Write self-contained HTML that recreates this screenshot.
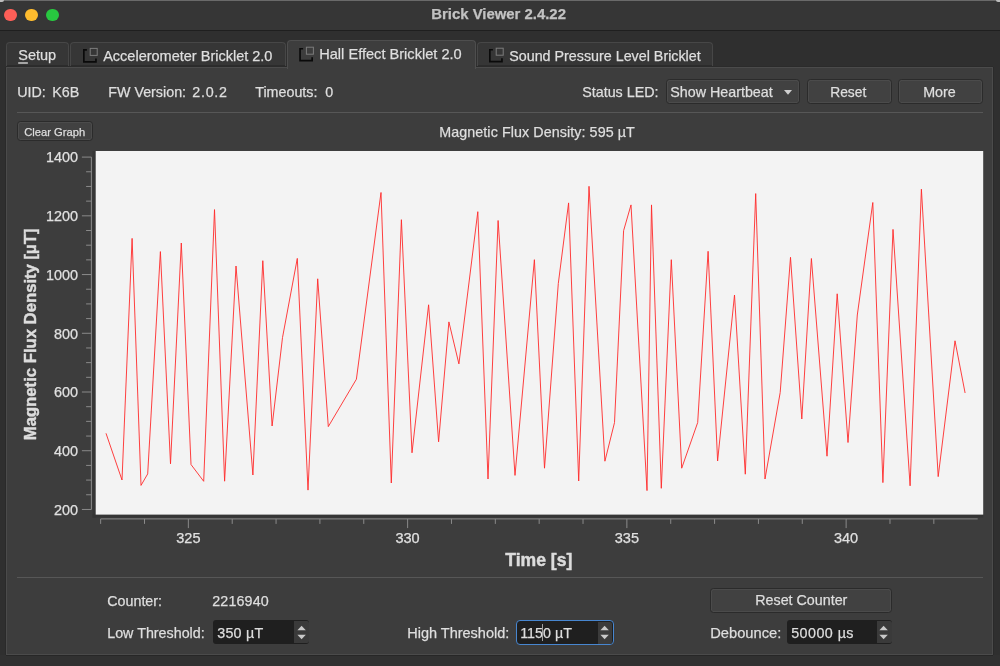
<!DOCTYPE html>
<html><head><meta charset="utf-8">
<style>
*{margin:0;padding:0;box-sizing:border-box}
html,body{width:1000px;height:666px;overflow:hidden;background:#2f2f2f}
body{position:relative;font-family:"Liberation Sans",sans-serif;color:#dedede;font-size:14.3px;-webkit-text-stroke:0.25px currentColor}
.a{position:absolute;white-space:nowrap;will-change:transform;text-indent:-0.8px}
#titlebar{position:absolute;left:0;top:0;width:1000px;height:31px;background:#363636;border-bottom:1px solid #1f1f1f}
.tl{position:absolute;top:8.5px;width:12.5px;height:12.5px;border-radius:50%}
.tab{position:absolute;top:42px;height:24.4px;background:#363636;border:1px solid #474747;border-bottom:none;border-radius:4px 4px 0 0;box-shadow:inset 0 -1px 0 #2c2c2c}
.tab.sel{top:40px;height:29px;background:#3d3d3d;border-color:#4e4e4e;z-index:2;border-bottom:none;box-shadow:none}
#pane{position:absolute;left:6px;top:67.4px;width:987px;height:587.6px;background:#3d3d3d;border:1px solid #4b4b4b;box-shadow:0 1px 0 #272727,0 -1px 0 #2b2b2b,-1px 0 0 #2a2a2a,1px 0 0 #2a2a2a}
.btn{position:absolute;background:#414141;border:1px solid #2b2b2b;border-radius:3.5px;box-shadow:inset 0 0 0 1px #4b4b4b,inset 0 1px 0 #575757}
.spin{position:absolute;background:#1f1f1f;border-radius:3px}
.hr{position:absolute;height:1px;background:#575757}
</style></head><body>
<div id="titlebar"></div>
<div class="a" style="left:0;top:0;width:1000px;height:1px;background:#6a6a6a"></div>
<div class="a" style="left:0;top:0;width:4px;height:2px;background:#bdbdbd;border-radius:0 0 4px 0"></div>
<div class="a" style="left:996px;top:0;width:4px;height:2px;background:#bdbdbd;border-radius:0 0 0 4px"></div>
<div class="tl" style="left:4.4px;background:#fe5f57"></div>
<div class="tl" style="left:25.4px;background:#febc2e"></div>
<div class="tl" style="left:46.4px;background:#28c840"></div>
<div class="a" style="left:0;width:998px;top:6px;text-align:center;font-weight:bold;font-size:14.9px;color:#c2c2c2">Brick Viewer 2.4.22</div>

<div class="a" style="left:0;top:655px;width:1000px;height:11px;background:#313131"></div>
<div id="pane"></div>

<div class="tab" style="left:6px;width:63px"></div>
<div class="tab" style="left:70px;width:216px"></div>
<div class="tab sel" style="left:287px;width:189px"></div>
<div class="tab" style="left:477px;width:236px"></div>

<div class="a" style="left:18.6px;top:47.4px;z-index:3;font-size:14.5px"><u style="text-decoration-color:#a5a5a5;text-decoration-thickness:1.6px;text-underline-offset:1.6px">S</u>etup</div>
<div class="a" style="left:103.5px;top:48px;z-index:3;font-size:14.5px">Accelerometer Bricklet 2.0</div>
<div class="a" style="left:320px;top:46.3px;z-index:3;font-size:14.6px">Hall Effect Bricklet 2.0</div>
<div class="a" style="left:510px;top:48px;z-index:3">Sound Pressure Level Bricklet</div>

<!-- info row -->
<div class="a" style="left:18px;top:84px">UID:</div>
<div class="a" style="left:52.5px;top:84px">K6B</div>
<div class="a" style="left:108.5px;top:84px">FW Version:</div>
<div class="a" style="left:193px;top:84px;letter-spacing:0.75px">2.0.2</div>
<div class="a" style="left:256px;top:84px">Timeouts:</div>
<div class="a" style="left:326px;top:84px">0</div>
<div class="a" style="left:583px;top:84px">Status LED:</div>
<div class="btn" style="left:666px;top:79px;width:134px;height:25px"></div>
<div class="a" style="left:671px;top:84px">Show Heartbeat</div>
<div class="btn" style="left:807px;top:79px;width:85px;height:25px"></div>
<div class="a" style="left:831px;top:84.7px;font-size:13.8px">Reset</div>
<div class="btn" style="left:898px;top:79px;width:85px;height:25px"></div>
<div class="a" style="left:924px;top:84px">More</div>
<div class="hr" style="left:17px;top:112px;width:966px"></div>

<div class="btn" style="left:17px;top:121px;width:76px;height:20px"></div>
<div class="a" style="left:24.5px;top:125.5px;font-size:11.2px">Clear Graph</div>
<div class="a" style="left:440px;top:123.7px;letter-spacing:0.08px">Magnetic Flux Density: 595 µT</div>

<svg class="a" style="left:0;top:0" width="1000" height="666" id="plot">
<rect x="92.6" y="151" width="3.1" height="366.5" fill="#363636"/>
<rect x="92.6" y="514.6" width="890.6" height="3" fill="#353535"/>
<rect x="95.7" y="151" width="887.5" height="363.6" fill="#f3f3f3"/>
<polyline points="106.0,433.3 122.0,480.0 132.1,238.4 141.0,485.4 147.7,473.9 160.4,251.6 170.5,463.8 181.3,243.0 191.0,464.5 203.7,481.3 214.5,209.6 224.6,481.2 236.0,266.0 252.9,475.0 262.8,260.7 272.1,426.0 282.5,337.6 297.3,258.4 308.0,490.1 317.7,278.8 328.3,426.6 356.4,379.2 381.0,192.5 391.3,483.0 401.4,219.7 412.0,452.8 428.6,304.8 438.6,441.8 448.9,321.9 458.9,363.9 477.8,211.7 488.0,479.0 498.1,220.5 515.0,475.4 534.4,259.7 544.5,468.2 558.3,283.5 568.6,202.9 578.7,481.0 589.0,186.3 604.9,461.2 614.5,422.6 623.6,230.7 631.0,204.9 647.0,490.6 651.5,204.9 661.3,488.3 671.3,259.7 681.7,468.2 697.7,422.5 708.1,251.3 717.6,461.0 734.5,295.0 745.3,474.2 755.7,193.6 765.0,479.0 780.2,392.5 790.5,257.3 801.8,419.0 811.4,258.5 827.0,456.2 837.2,293.8 848.0,442.5 857.3,315.0 872.8,202.5 882.9,482.6 893.0,229.4 910.1,485.8 921.4,189.2 938.2,476.6 955.0,340.8 965.1,393.0" fill="none" stroke="#ff2a2a" stroke-width="0.9" stroke-linejoin="miter" stroke-miterlimit="10"/>
<path d="M91.4,157.1V509.4 M81.9,157.10H91.4 M86.1,171.78H91.4 M86.1,186.46H91.4 M86.1,201.14H91.4 M81.9,215.83H91.4 M86.1,230.51H91.4 M86.1,245.19H91.4 M86.1,259.87H91.4 M81.9,274.55H91.4 M86.1,289.23H91.4 M86.1,303.91H91.4 M86.1,318.60H91.4 M81.9,333.28H91.4 M86.1,347.96H91.4 M86.1,362.64H91.4 M86.1,377.32H91.4 M81.9,392.00H91.4 M86.1,406.69H91.4 M86.1,421.37H91.4 M86.1,436.05H91.4 M81.9,450.73H91.4 M86.1,465.41H91.4 M86.1,480.09H91.4 M86.1,494.77H91.4 M81.9,509.46H91.4 M100.65,518.9H977.7 M100.65,518.9V523.9 M144.50,518.9V523.9 M188.35,518.9V528.1 M232.21,518.9V523.9 M276.06,518.9V523.9 M319.91,518.9V523.9 M363.76,518.9V523.9 M407.61,518.9V528.1 M451.47,518.9V523.9 M495.32,518.9V523.9 M539.17,518.9V523.9 M583.02,518.9V523.9 M626.87,518.9V528.1 M670.73,518.9V523.9 M714.58,518.9V523.9 M758.43,518.9V523.9 M802.28,518.9V523.9 M846.13,518.9V528.1 M889.99,518.9V523.9 M933.84,518.9V523.9" stroke="#8a8a8a" stroke-width="1" fill="none"/>
<text x="78" y="162.4" text-anchor="end" font-size="14.4" fill="#e0e0e0" stroke="#e0e0e0" stroke-width="0.25">1400</text>
<text x="78" y="221.1" text-anchor="end" font-size="14.4" fill="#e0e0e0" stroke="#e0e0e0" stroke-width="0.25">1200</text>
<text x="78" y="279.9" text-anchor="end" font-size="14.4" fill="#e0e0e0" stroke="#e0e0e0" stroke-width="0.25">1000</text>
<text x="78" y="338.6" text-anchor="end" font-size="14.4" fill="#e0e0e0" stroke="#e0e0e0" stroke-width="0.25">800</text>
<text x="78" y="397.3" text-anchor="end" font-size="14.4" fill="#e0e0e0" stroke="#e0e0e0" stroke-width="0.25">600</text>
<text x="78" y="456.0" text-anchor="end" font-size="14.4" fill="#e0e0e0" stroke="#e0e0e0" stroke-width="0.25">400</text>
<text x="78" y="514.8" text-anchor="end" font-size="14.4" fill="#e0e0e0" stroke="#e0e0e0" stroke-width="0.25">200</text>
<text x="188.4" y="542.6" text-anchor="middle" font-size="14.5" fill="#e0e0e0" stroke="#e0e0e0" stroke-width="0.25">325</text>
<text x="407.6" y="542.6" text-anchor="middle" font-size="14.5" fill="#e0e0e0" stroke="#e0e0e0" stroke-width="0.25">330</text>
<text x="626.9" y="542.6" text-anchor="middle" font-size="14.5" fill="#e0e0e0" stroke="#e0e0e0" stroke-width="0.25">335</text>
<text x="846.1" y="542.6" text-anchor="middle" font-size="14.5" fill="#e0e0e0" stroke="#e0e0e0" stroke-width="0.25">340</text>
<text x="538.8" y="565.8" text-anchor="middle" font-size="17.6" font-weight="bold" fill="#dcdcdc" stroke="#dcdcdc" stroke-width="0.45">Time [s]</text>
<text transform="translate(35.9,334.4) rotate(-90)" text-anchor="middle" font-size="16.7" font-weight="bold" fill="#dcdcdc" stroke="#dcdcdc" stroke-width="0.45">Magnetic Flux Density [µT]</text>
</svg>

<div class="hr" style="left:17px;top:577px;width:966px"></div>
<div class="a" style="left:107.5px;top:593px">Counter:</div>
<div class="a" style="left:212.5px;top:593px;letter-spacing:0.15px">2216940</div>
<div class="btn" style="left:710px;top:587.5px;width:182px;height:25px"></div>
<div class="a" style="left:756px;top:592.4px">Reset Counter</div>
<div class="a" style="left:107.5px;top:625px">Low Threshold:</div>
<div class="a" style="left:408px;top:625px;font-size:14.5px">High Threshold:</div>
<div class="a" style="left:710.5px;top:625px;font-size:14.7px">Debounce:</div>

<!-- tab icons -->
<svg class="a" style="left:0;top:0;z-index:4" width="1000" height="80">
<defs><g id="ic1">
<path d="M3.9,0.85H0.85V12.75H12.95V9.3" fill="none" stroke="#0a0a0a" stroke-width="1.7"/>
<rect x="7.2" y="-0.7" width="7" height="7" fill="none" stroke="#7c7c7c" stroke-width="1"/>
</g></defs>
<use href="#ic1" transform="translate(83,49.1)"/>
<use href="#ic1" transform="translate(299.2,47.9)"/>
<use href="#ic1" transform="translate(489,48.9)"/>
</svg>
<!-- combo arrow -->
<svg class="a" style="left:783px;top:88.5px" width="10" height="7"><path d="M1,1H9L5,5.8Z" fill="#cfcfcf"/></svg>
<!-- spin boxes -->
<div class="spin" style="left:213px;top:620px;width:96px;height:24px"></div>
<div class="a" style="left:294.2px;top:621.3px;width:14.5px;height:22px;background:#3a3a3a;border-radius:0 2px 2px 0"></div>
<div class="a" style="left:218px;top:625px;letter-spacing:0.25px">350 µT</div>
<div class="spin" style="left:516px;top:620px;width:98px;height:25px;border:1.6px solid #4786d0;border-radius:4px"></div>
<div class="a" style="left:598px;top:621.6px;width:14.2px;height:21.8px;background:#3b3b3b;border-radius:0 2px 2px 0"></div>
<div class="a" style="left:521px;top:625px">1150 µT</div>
<div class="a" style="left:542px;top:624px;width:1.1px;height:16.5px;background:#a0a0a0"></div>
<div class="spin" style="left:787px;top:620px;width:105px;height:24px"></div>
<div class="a" style="left:876.8px;top:621.3px;width:14.5px;height:22px;background:#3a3a3a;border-radius:0 2px 2px 0"></div>
<div class="a" style="left:792px;top:625px;letter-spacing:0.45px">50000 µs</div>
<svg class="a" style="left:0;top:600px" width="1000" height="66">
<g id="ar" fill="#c9c9c9"><path d="M297.4,30.3L301.6,25.8L305.8,30.3Z"/><path d="M297.4,34.8L301.6,39.3L305.8,34.8Z"/></g>
<use href="#ar" transform="translate(303,0)"/>
<use href="#ar" transform="translate(582,0)"/>
</svg>
</body></html>
